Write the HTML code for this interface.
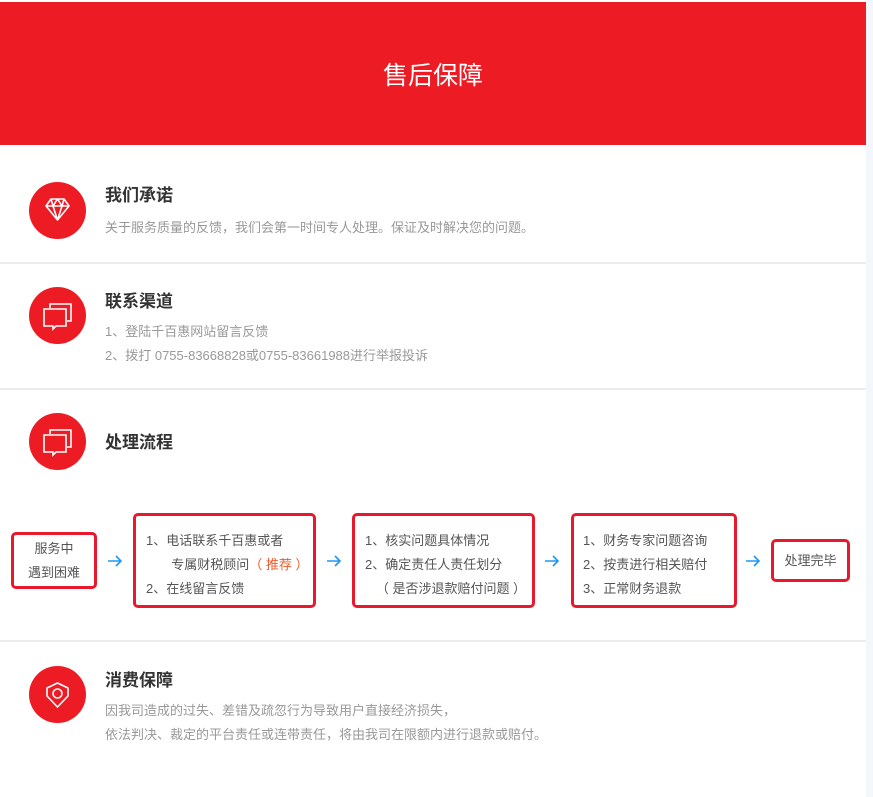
<!DOCTYPE html>
<html><head><meta charset="utf-8"><style>
*{margin:0;padding:0;box-sizing:border-box}
body{width:873px;height:797px;background:#fff;font-family:"Liberation Sans","Noto Sans CJK SC",sans-serif;position:relative;overflow:hidden}
.a{position:absolute}
.hdr{left:0;top:2px;width:866px;height:143px;background:#ed1c24;color:#fff;font-size:25px;text-align:center;line-height:148px}
.strip{left:866px;top:0;width:7px;height:797px;background:#f3f6fb}
.line{left:0;width:866px;height:2px;background:#ececec}
.c{width:57px;height:57px;border-radius:50%;background:#ed1c24;left:29px}
.c svg{position:absolute;left:0;top:0}
.t{left:105px;font-size:17px;font-weight:bold;color:#333;line-height:20px}
.d{left:105px;font-size:13px;color:#999;line-height:24px}
.b{border:3px solid #e8192c;border-radius:5px;font-size:13px;color:#555;line-height:24px}
.ar{top:554px}
</style></head><body>
<div class="a hdr">售后保障</div>
<div class="a strip"></div>

<div class="a c" style="top:182px"><svg width="57" height="57" viewBox="0 0 57 57" fill="none" stroke="#fff" stroke-width="1.6" stroke-linejoin="round"><path d="M17 24 L22 17 H35 L40 24 L28.5 38 Z M17 24 H40 M22 17 L24 24 L28.5 38 L33 24 L35 17 M24 24 L28.5 17 L33 24"/></svg></div>
<div class="a t" style="top:186px">我们承诺</div>
<div class="a d" style="top:216px">关于服务质量的反馈，我们会第一时间专人处理。保证及时解决您的问题。</div>
<div class="a line" style="top:262px"></div>

<div class="a c" style="top:287px"><svg width="57" height="57" viewBox="0 0 57 57" fill="none" stroke="#fff" stroke-width="1.6"><path d="M21 21 V17 H42 V34 H38"/><path d="M15 22 H37 V39 H27 L24 42 V39 H15 Z"/></svg></div>
<div class="a t" style="top:292px">联系渠道</div>
<div class="a d" style="top:320px">1、登陆千百惠网站留言反馈<br>2、拨打 0755-83668828或0755-83661988进行举报投诉</div>
<div class="a line" style="top:388px"></div>

<div class="a c" style="top:413px"><svg width="57" height="57" viewBox="0 0 57 57" fill="none" stroke="#fff" stroke-width="1.6"><path d="M21 21 V17 H42 V34 H38"/><path d="M15 22 H37 V39 H27 L24 42 V39 H15 Z"/></svg></div>
<div class="a t" style="top:433px">处理流程</div>

<div class="a b" style="left:11px;top:532px;width:86px;height:57px;text-align:center;padding-top:2px">服务中<br>遇到困难</div>
<svg class="a ar" style="left:107px" width="16" height="14" viewBox="0 0 16 14" fill="none" stroke="#2196f3" stroke-width="1.6"><path d="M1 7 H14 M9 2 L14 7 L9 12"/></svg>
<div class="a b" style="left:133px;top:513px;width:183px;height:95px;padding:13px 0 0 10px">1、电话联系千百惠或者<br>&nbsp;&nbsp;&nbsp;&nbsp;&nbsp;&nbsp;&nbsp;专属财税顾问<span style="color:#f05a28">（ 推荐 ）</span><br>2、在线留言反馈</div>
<svg class="a ar" style="left:326px" width="16" height="14" viewBox="0 0 16 14" fill="none" stroke="#2196f3" stroke-width="1.6"><path d="M1 7 H14 M9 2 L14 7 L9 12"/></svg>
<div class="a b" style="left:352px;top:513px;width:183px;height:95px;padding:13px 0 0 10px">1、核实问题具体情况<br>2、确定责任人责任划分<br>&nbsp;&nbsp;&nbsp;（ 是否涉退款赔付问题 ）</div>
<svg class="a ar" style="left:544px" width="16" height="14" viewBox="0 0 16 14" fill="none" stroke="#2196f3" stroke-width="1.6"><path d="M1 7 H14 M9 2 L14 7 L9 12"/></svg>
<div class="a b" style="left:571px;top:513px;width:166px;height:95px;padding:13px 0 0 9px">1、财务专家问题咨询<br>2、按责进行相关赔付<br>3、正常财务退款</div>
<svg class="a ar" style="left:745px" width="16" height="14" viewBox="0 0 16 14" fill="none" stroke="#2196f3" stroke-width="1.6"><path d="M1 7 H14 M9 2 L14 7 L9 12"/></svg>
<div class="a b" style="left:771px;top:539px;width:79px;height:43px;text-align:center;padding-top:7px">处理完毕</div>

<div class="a line" style="top:640px"></div>
<div class="a c" style="top:666px"><svg width="57" height="57" viewBox="0 0 57 57" fill="none" stroke="#fff" stroke-width="1.6" stroke-linejoin="round"><path d="M18 22 L28.5 17 L39 22 V30 L28.5 41 L18 30 Z"/><circle cx="28.5" cy="27.5" r="4.5"/></svg></div>
<div class="a t" style="top:671px">消费保障</div>
<div class="a d" style="top:699px">因我司造成的过失、差错及疏忽行为导致用户直接经济损失，<br>依法判决、裁定的平台责任或连带责任，将由我司在限额内进行退款或赔付。</div>
</body></html>
